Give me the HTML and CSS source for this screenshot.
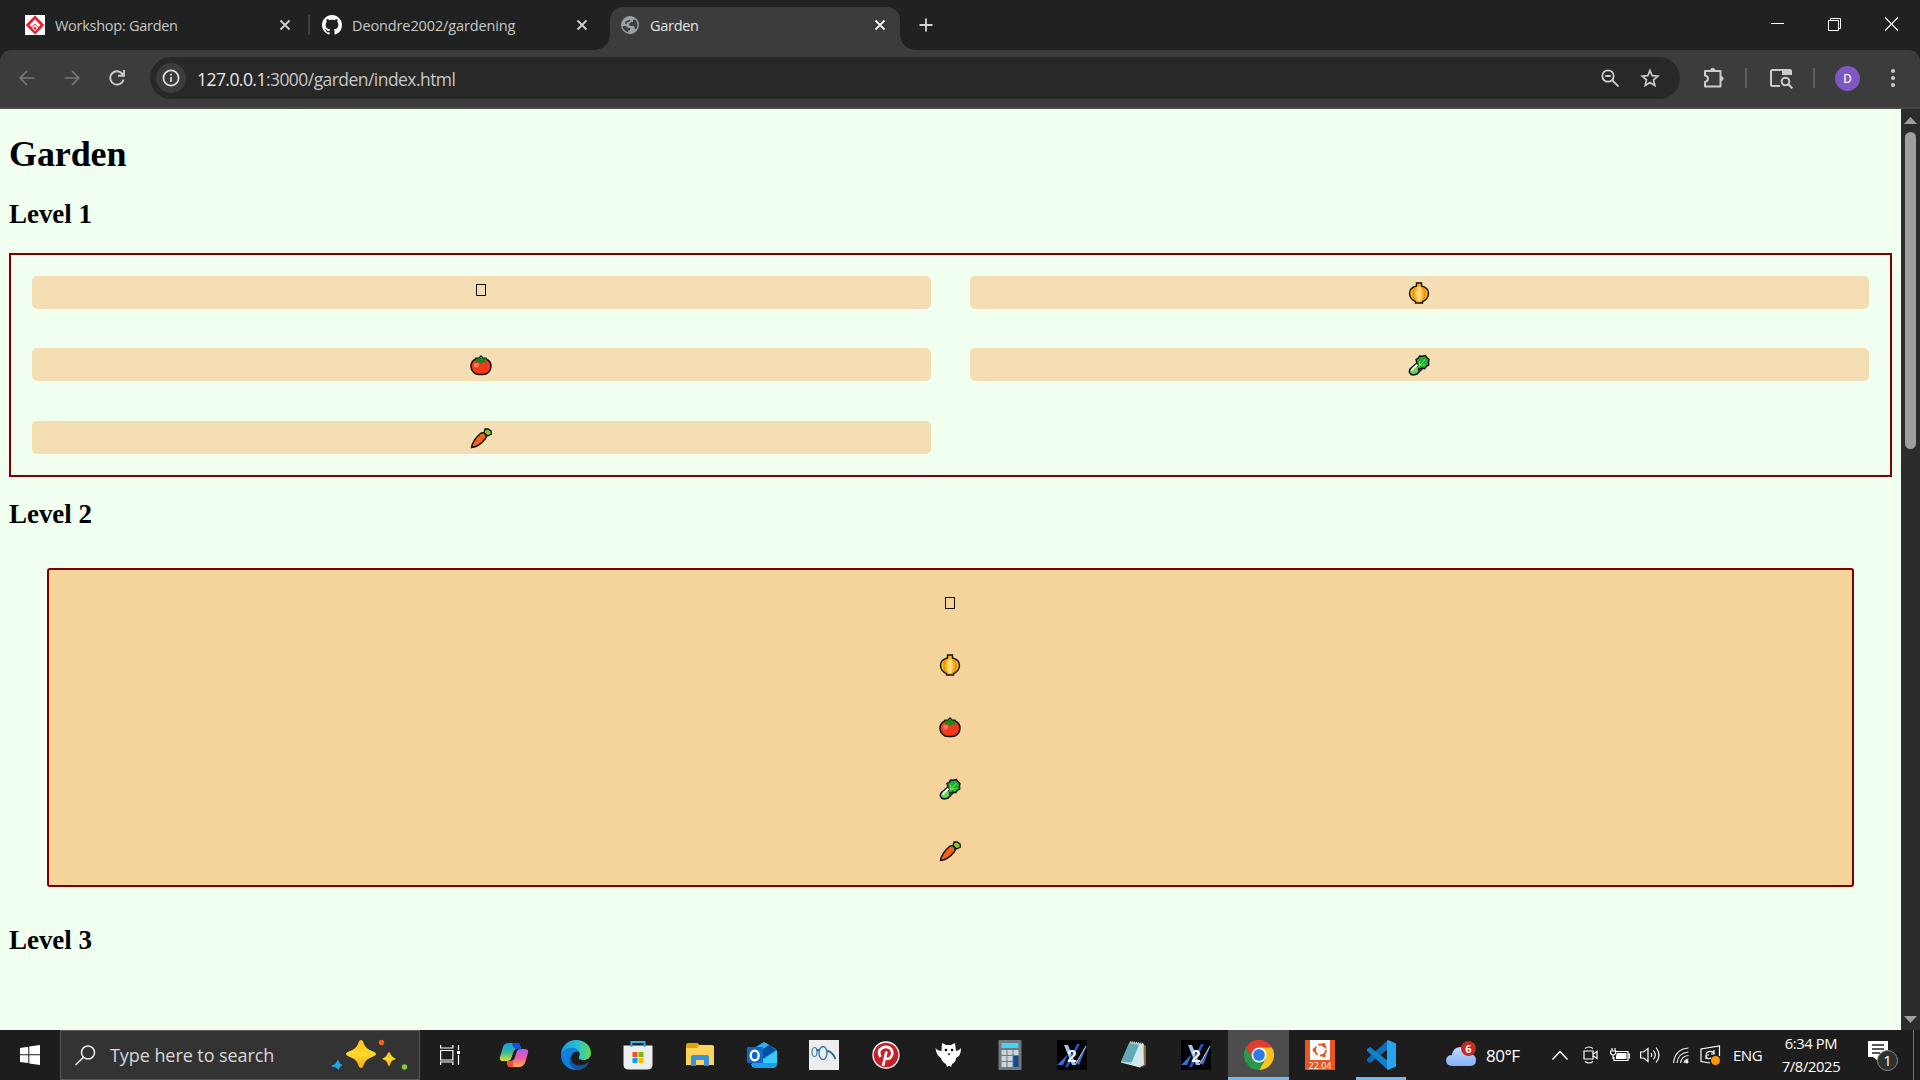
FILE: index.html
```html
<!DOCTYPE html>
<html lang="en">
<head>
<meta charset="utf-8">
<title>Garden</title>
<link rel="stylesheet" href="styles.css">
</head>
<body>
<svg class="defs" aria-hidden="true">
  <symbol id="tofu" viewBox="0 0 22 22"><path d="M6.5 2.5h9v11h-9z" fill="none" stroke="#111" shape-rendering="crispEdges"/></symbol>
  <symbol id="onion" viewBox="0 0 22 22">
    <path d="M8.500 1h5v3C18 5 20.500 8 20.500 11.500S18 18.500 14.500 19.500v1.500h-7v-1.500C4 18.500 1.500 15 1.500 11.500S4 5 8.500 4z" fill="#ffb31a" stroke="#111" stroke-width="1.400"/>
    <path d="M9.500 5h3c1.500 4 1.500 10 0 14h-3c-1.500-4-1.500-10 0-14z" fill="#ffd77a"/>
    <path d="M7 5.500c-2.500 4-2.500 9 0 13M15 5.500c2.500 4 2.500 9 0 13" fill="none" stroke="#d98a0a" stroke-width="1.200"/>
  </symbol>
  <symbol id="tomato" viewBox="0 0 22 22">
    <path d="M6 5h10c3 1 5 3.500 5 7.500 0 4.500-4 8-8 8H9c-4 0-8-3.500-8-8C1 8.500 3 6 6 5z" fill="#f23a1a" stroke="#111" stroke-width="1.500"/>
    <circle cx="6.500" cy="11" r="2.600" fill="#fa755e"/>
    <path d="M5 4.500l4-.5 2-2 2 2 4 .5" fill="none" stroke="#111" stroke-width="1.300"/>
    <path d="M11 2.800l1.800 1.700 4 .3-1.300 1.700 1 2.500-3-1L11 10 8.500 8l-3 1 1-2.500-1.300-1.700 4-.3z" fill="#118a1a"/>
  </symbol>
  <symbol id="greens" viewBox="0 0 22 22">
    <path d="M9.500 8.500L2.500 14.500c-2.500 3-.5 6.500 3 6.500l3.500-1 6-6" fill="#5fd45c" stroke="#111" stroke-width="1.500"/>
    <path d="M9 9L8 5.500l2.500-1.500 1-2 3 .3 3-.8 1.500 2.300 2 1.700-.5 3 .2 2.500-2.500 1.500-1.500 2.300-3-.8-3 2z" fill="#20b12c" stroke="#111" stroke-width="1.400"/>
    <path d="M7 17L17 5.500M11.500 11.500V7M12 11h5" stroke="#7be26e" fill="none"/>
    <path d="M3.500 17c1-3 4-4.500 6-6.500" stroke="#e8fbe8" stroke-width="2" fill="none"/>
  </symbol>
  <symbol id="carrot" viewBox="0 0 22 22">
    <path d="M14 6l1-4 3 0 3 2 .5 3-4 2z" fill="#8cc61a" stroke="#111" stroke-width="1.300"/>
    <path d="M1.500 20.500C2 16 6 10 10.500 6.500c4-2 7 1.500 5 5C12 16 7 20 1.500 20.500z" fill="#f9661a" stroke="#111" stroke-width="1.500"/>
    <path d="M9 9l1.500 1.500M6 13l1.500 1M12 11l1 1.500" stroke="#c84c0c"/>
  </symbol>
  <symbol id="x" viewBox="0 0 12 12"><path d="M1.500 1.500l9 9M10.500 1.500l-9 9" stroke="currentColor" stroke-width="1.800" fill="none"/></symbol>
  <symbol id="x2" viewBox="0 0 30 30">
    <path d="M0 0h30v30H0z" fill="#000"/>
    <path d="M7 5h4l8 20h-4z" fill="#9fc4ee"/><path d="M20 4h3L11 27H8z" fill="#2454c8"/>
    <path d="M0 25L11 14 6 25zM30 5L19 23l3 2z" fill="#3570d8"/><path d="M29 6L18 25" stroke="#b8cce8"/>
  </symbol>
</svg>

<header class="tabs">
  <div class="tab tab-first">
    <svg class="fav" viewBox="0 0 20 20"><path d="M0 0h20v20H0z" fill="#fff"/><path d="M10 .5l9.300 9.500-9.300 9.500L.7 10z" fill="#ec1c2c"/><path d="M10 4.300l5.500 5.700-2 2-3.500-3.500L6.500 12l-2-2z" fill="#fff"/><path d="M10 9.500l3.300 3.300-3.300 3.400-3.300-3.400z" fill="#fff"/><path d="M10 11.500l1.700 1.700L10 15l-1.700-1.800z" fill="#ec1c2c"/></svg>
    <span class="t-workshop">Workshop: Garden</span><svg class="close"><use href="#x"/></svg>
  </div>
  <div class="tab tab-second">
    <svg class="fav" viewBox="0 0 16 16"><path fill="#fff" d="M8 0C3.580 0 0 3.580 0 8c0 3.540 2.290 6.530 5.470 7.590.4.070.55-.17.55-.38 0-.19-.01-.82-.01-1.490-2.010.37-2.530-.49-2.690-.94-.09-.23-.48-.94-.82-1.130-.28-.15-.68-.52-.01-.53.63-.01 1.080.58 1.230.82.720 1.210 1.870.87 2.330.66.070-.52.280-.87.510-1.070-1.780-.2-3.640-.89-3.640-3.950 0-.87.310-1.590.82-2.150-.08-.2-.36-1.020.08-2.120 0 0 .67-.21 2.200.82.640-.18 1.320-.27 2-.27s1.360.09 2 .27c1.530-1.040 2.200-.82 2.200-.82.440 1.100.16 1.920.08 2.120.51.56.82 1.270.82 2.150 0 3.070-1.870 3.750-3.650 3.950.29.25.54.73.54 1.480 0 1.070-.01 1.930-.01 2.200 0 .21.150.46.550.38A8.010 8.010 0 0 0 16 8c0-4.420-3.580-8-8-8z"/></svg>
    <span class="t-github">Deondre2002/gardening</span><svg class="close"><use href="#x"/></svg>
  </div>
  <div class="tab tab-active">
    <svg class="fav globe" viewBox="0 0 18 18"><circle cx="9" cy="9" r="8.200" fill="#3c3c3c" stroke="#9aa0a6" stroke-width="1.500"/><path d="M9 .8A8.200 8.200 0 0 0 1 10h4l1 1.500 3 .5v2l-2 1 0 2c4 1 7 0 9-3l-2-1-1-3-4 0-1-2 2-2h2V4l3-1C13 1.500 11 .8 9 .8z" fill="#9aa0a6"/><path d="M5 8V6l4-1.500" stroke="#3c3c3c" stroke-width="1.500" fill="none"/></svg>
    <span class="t-garden">Garden</span><svg class="close"><use href="#x"/></svg>
  </div>
  <svg class="plus" viewBox="0 0 14 14"><path d="M7 .5v13M.5 7h13" stroke="#d5d5d5" stroke-width="1.800"/></svg>
  <div class="window-buttons">
    <svg width="13" height="14"><path d="M0 6.500h13" stroke="#fff"/></svg>
    <svg width="13" height="14"><path d="M.5 3.500h10v10H.5zM2.500 3V1.500h10v10H11" stroke="#fff" fill="none"/></svg>
    <svg width="13" height="14"><path d="M0 .5l13 13M13 .5l-13 13" stroke="#fff" stroke-width="1.200"/></svg>
  </div>
</header>

<nav class="toolbar">
  <div class="nav-icons">
    <svg width="16" height="16" viewBox="0 0 16 16" stroke="#777" stroke-width="1.700" fill="none"><path d="M15.500 8H1.500M8 1L1.200 8 8 15"/></svg>
    <svg width="16" height="16" viewBox="0 0 16 16" stroke="#777" stroke-width="1.700" fill="none"><path d="M.5 8h14M8 1l6.800 7L8 15"/></svg>
    <svg width="16" height="16" viewBox="0 0 16 16" stroke="#ccc" stroke-width="1.900" fill="none"><path d="M14.500 9.500A6.700 6.700 0 1 1 13 3.500L15 5.500M15 0v5.700H9"/></svg>
  </div>
  <div class="omnibox">
    <span class="info"><svg width="18" height="18"><circle cx="9" cy="9" r="7.600" fill="none" stroke="#dedede" stroke-width="1.700"/><path d="M9 8v5M9 4.800v1.800" stroke="#dedede" stroke-width="1.700"/></svg></span>
    <span class="url"><b>127.0.0.1</b>:3000/garden/index.html</span>
    <svg class="zoom-out" width="18" height="18" fill="none" stroke="#ccc" stroke-width="1.800"><circle cx="7" cy="7" r="5.700"/><path d="M11 11l6.500 6.500M4.200 7h5.600"/></svg>
    <svg class="star" width="20" height="20" viewBox="0 0 20 20" fill="none" stroke="#ccc" stroke-width="1.700"><path d="M10 2.500l2.200 5.200 5.600.5-4.300 3.700 1.300 5.500L10 14.500l-4.800 2.900 1.300-5.500-4.300-3.700 5.600-.5z"/></svg>
  </div>
  <svg class="puzzle" width="22" height="22" viewBox="0 0 22 22" fill="none" stroke="#ccc" stroke-width="2"><path d="M2 4h15.500v15.500H2v-4.500c4-1 4-5.500 0-6.500z" stroke-linejoin="round"/><path d="M7.500 3.500a2.200 2.200 0 0 1 4.400 0zM18 9.500a2 2 0 0 1 0 4.200z" fill="#ccc" stroke-width="1"/></svg>
  <i class="bar"></i>
  <svg class="side" width="23" height="20" viewBox="0 0 23 20" fill="none" stroke="#ccc" stroke-width="2"><path d="M10 17H2.500Q1 17 1 15.500V2.500Q1 1 2.500 1H20"/><path d="M12 0h8q2 0 2 2v4H12z" fill="#ccc" stroke="none"/><circle cx="15.500" cy="12.500" r="3.800"/><path d="M18.300 15.300l4 4"/></svg>
  <i class="bar"></i>
  <span class="avatar">D</span>
  <svg class="dots" width="4" height="20" fill="#ccc"><circle cx="2" cy="3" r="2"/><circle cx="2" cy="10" r="2"/><circle cx="2" cy="17" r="2"/></svg>
</nav>

<div class="viewport">
  <main class="page">
    <h1>Garden</h1>
    <h2>Level 1</h2>
    <section class="level-one">
      <div class="plot"><svg><use href="#tofu"/></svg></div>
      <div class="plot"><svg><use href="#onion"/></svg></div>
      <div class="plot"><svg><use href="#tomato"/></svg></div>
      <div class="plot"><svg><use href="#greens"/></svg></div>
      <div class="plot"><svg><use href="#carrot"/></svg></div>
    </section>
    <h2>Level 2</h2>
    <section class="level-two">
      <div class="missing"><svg><use href="#tofu"/></svg></div>
      <div><svg><use href="#onion"/></svg></div>
      <div><svg><use href="#tomato"/></svg></div>
      <div><svg><use href="#greens"/></svg></div>
      <div><svg><use href="#carrot"/></svg></div>
    </section>
    <h2>Level 3</h2>
  </main>
  <aside class="scrollbar">
    <svg width="13" height="7"><path d="M0 7L6.500 0 13 7z" fill="#9f9f9f"/></svg>
    <div class="thumb"></div>
    <svg class="down" width="13" height="7"><path d="M0 0l6.500 7L13 0z" fill="#9f9f9f"/></svg>
  </aside>
</div>

<footer class="taskbar">
  <div class="start"><svg width="20" height="20" fill="#fff"><path d="M0 3l8.300-1.200v7.500H0zM9.300 1.600L20 0v9.300H9.300zM0 10.300h8.300v7.800L0 17zM9.300 10.300H20V20l-10.700-1.600z"/></svg></div>
  <div class="search">
    <svg width="21" height="21" fill="none" stroke="#eee" stroke-width="1.500"><circle cx="13" cy="7.500" r="6.500"/><path d="M8.500 12.200L.5 20"/></svg>
    <span>Type here to search</span>
    <svg class="sparkles" width="78" height="32" viewBox="0 0 78 32">
      <defs><linearGradient id="gold" x1="0" y1="0" x2="0" y2="1"><stop offset="0" stop-color="#ffbd16"/><stop offset=".5" stop-color="#ffd92e"/><stop offset="1" stop-color="#ffa914"/></linearGradient></defs>
      <path d="M30 1q2 0 3 4 2 5 8 7 4 1.500 4 3t-4 3q-6 2-8 7-1 4-3 4t-3-4q-2-5-8-7-4-1.500-4-3t4-3q6-2 8-7 1-4 3-4z" fill="url(#gold)"/>
      <path d="M58 13q1 0 2 3 1 2 5 4-4 1-5 3-1 4-2 4t-2-4q-1-2-5-3 4-2 5-4 1-3 2-3z" fill="url(#gold)"/>
      <path d="M7 21.500l1.500 3.500 2.500 1-2.500 1.500-1 3-2.500-2.500-4-1 3.500-1.500z" fill="#16aaf2" stroke="#16aaf2" stroke-linejoin="round"/>
      <circle cx="50.500" cy="3.500" r="2.700" fill="#f2621e"/><circle cx="73.500" cy="28" r="2.700" fill="#86c937"/>
    </svg>
  </div>
  <div class="task-view"><svg width="20" height="20" fill="none" stroke="#fff" stroke-width="1.200"><path d="M.6 5.500h12.300v9.500H.6zM.6 0v3h12.300V0M.6 20v-3h12.300v3M18.500 0v5M18.500 10v10"/><path d="M17 6h3v3h-3z" fill="#fff" stroke="none"/></svg></div>

  <div class="app"><svg viewBox="0 0 30 30"><defs><linearGradient id="ca" x1="0" y1="0" x2="0" y2="1"><stop offset="0" stop-color="#159cf0"/><stop offset=".5" stop-color="#2ebc9a"/><stop offset="1" stop-color="#e6d92a"/></linearGradient><linearGradient id="cb" x1="0" y1="0" x2="0" y2="1"><stop offset="0" stop-color="#a961f0"/><stop offset=".5" stop-color="#ef5aa2"/><stop offset="1" stop-color="#ffae4e"/></linearGradient></defs><path d="M10 3h9q2 0 3 6h-4q-3 0-4 4l-2 6q-1 2-4 2H4q-4 0-3-4l3-10q1-4 6-4z" fill="url(#ca)"/><path d="M13 3h6q2 0 3 6h-5q-3-1-4-6z" fill="#1552cf"/><path d="M20 27h-9q-3 0-3-6h4q3 0 4-4l2-6q1-2 4-2h4q4 0 3 4l-3 10q-2 4-6 4z" fill="url(#cb)"/><path d="M8 21h4q2 0 2-2l0 8h-3q-3 0-3-6z" fill="#ef4b38"/></svg></div>
  <div class="app"><svg viewBox="0 0 30 30"><defs><linearGradient id="ea"><stop offset="0" stop-color="#159bdc"/><stop offset=".6" stop-color="#2dc4cf"/><stop offset="1" stop-color="#66dc45"/></linearGradient></defs><path d="M0 15C0 6 7 0 15 0c9 0 15 6 15 13 0 5-4 7-7 7-4 0-6-1-5-3 4-7-8-12-18-2z" fill="url(#ea)"/><path d="M0 16c0-8 16-12 18-4-5-1-8 2-8 6 0 7 7 10 11 11C10 33 0 25 0 16z" fill="#1180dc"/><path d="M12 13c-6 10 4 17 16 9-2 5-7 8-12 8-8-2-10-11-4-17z" fill="#1254a2"/></svg></div>
  <div class="app"><svg viewBox="0 0 30 30"><path d="M.5 5.500h29v19q0 5-5 5h-19q-5 0-5-5z" fill="#eee"/><path d="M8.500 7V2h13v5" fill="none" stroke="#2bb2ee" stroke-width="2"/><path d="M9.500 12h5v5h-5z" fill="#f25022"/><path d="M15.500 12h5v5h-5z" fill="#7fba00"/><path d="M9.500 18h5v5h-5z" fill="#00a4ef"/><path d="M15.500 18h5v5h-5z" fill="#ffb900"/></svg></div>
  <div class="app"><svg viewBox="0 0 30 30"><path d="M1 5q0-2 2-2h10l2 3v4H1z" fill="#e2a106"/><path d="M14 5h13q2 0 2 2v18H1V8h11z" fill="#ffd35c"/><path d="M6 26v-9q0-2 2-2h14q2 0 2 2v9h-5v-6h-8v6z" fill="#3a92dc"/></svg></div>
  <div class="app"><svg viewBox="0 0 30 30"><path d="M3 10L17 2l12 7v6L16 23 3 20z" fill="#1490df"/><path d="M12 11l10-6 7 5-14 9z" fill="#0a4aa5"/><path d="M9 8l8-6 5 3-11 7z" fill="#35aef0"/><path d="M30 10v13q0 5-5 5H9q-4 0-5-4l13-5z" fill="#38cdf5"/><path d="M5 23h25q0 5-5 5H9q-4 0-4-5z" fill="#1b9fe8"/><rect y="7" width="16" height="16" rx="1" fill="#0f68c8"/><ellipse cx="7.700" cy="15.500" rx="4" ry="4.800" fill="none" stroke="#fff" stroke-width="2.300"/></svg></div>
  <div class="app"><svg viewBox="0 0 30 30"><path d="M0 0h30v30H0z" fill="#ededed"/><ellipse cx="5.500" cy="12" rx="2.500" ry="4.500" fill="#e6f2fa" stroke="#427ba8" stroke-width="1.200"/><ellipse cx="14" cy="13" rx="4" ry="6.500" fill="#e6f2fa" stroke="#427ba8" stroke-width="1.400"/><path d="M8 11q1-2 2 0M18 11q5 0 8.500 8" stroke="#2f658f" stroke-width="1.800" fill="none"/></svg></div>
  <div class="app"><svg viewBox="0 0 30 30"><circle cx="15" cy="15" r="13" fill="#c81f2b" stroke="#fff" stroke-width="1.300"/><path d="M9.500 17Q6 11 11 8q5-2.500 9 1 3 5-1 9-4 2-5-1M15.500 11.500L12 26" fill="none" stroke="#fff" stroke-width="2.700"/></svg></div>
  <div class="app"><svg viewBox="0 0 30 30"><path d="M2.500 8q2 3 6 3L9 3l4 2h5l4-2 1 8q3 0 5-3 0 8-5 10 0 4-4 6l-1 3-2-1.500-2 1.500-1-3q-4-2-5-6-5-3-5.500-10z" fill="#fff"/><circle cx="13" cy="10" r="1.300"/><circle cx="19" cy="10" r="1.300"/><path d="M14.500 13.500h3l-1.500 2z"/></svg></div>
  <div class="app"><svg viewBox="0 0 30 30"><rect x="3.500" width="23" height="30" rx="1" fill="#71797f"/><path d="M6.500 3h17v5h-17z" fill="#45d3f5"/><path d="M6.500 10h5v5h-5zM12.500 10h5v5h-5zM18.500 10h5v5h-5zM6.500 16h5v5h-5zM12.500 16h5v5h-5zM6.500 22h5v5h-5zM12.500 22h5v5h-5z" fill="#cdd5dc"/><path d="M18.500 16h5v11h-5z" fill="#154a86"/></svg></div>
  <div class="app"><svg viewBox="0 0 30 30"><use href="#x2"/><text x="15" y="22" text-anchor="middle" class="x2-digit">2</text></svg></div>
  <div class="app"><svg viewBox="0 0 30 30"><path d="M24 4l3 2v19l-4 2z" fill="#8a6a38"/><path d="M11 2l14 2-1 20-3 3L2 22z" fill="#9dd0d4"/><path d="M10 3l10 2-4 17-14 0z" fill="#62a9b3"/><path d="M20 5l4-1 1 20-5 3-8-3z" fill="#cfe9e8"/><path d="M2 22l19 5 4-3" fill="none" stroke="#e7f1ee"/><path d="M11 2l14 2" stroke="#ddd" stroke-width="2" stroke-dasharray="1 1"/></svg></div>
  <div class="app"><svg viewBox="0 0 30 30"><use href="#x2"/><text x="15" y="22" text-anchor="middle" class="x2-digit">2</text></svg></div>
  <div class="app app-active"><svg viewBox="0 0 30 30"><path d="M2 7.500A15 15 0 0 1 28 7.500H15L8.500 18.800z" fill="#e33b2e"/><path d="M28 7.500A15 15 0 0 1 15 30L21.500 18.800 15 7.500z" fill="#fcc31e"/><path d="M2 7.500A15 15 0 0 0 15 30l6.500-11.200H8.500z" fill="#269a48"/><circle cx="15" cy="15" r="7.500" fill="#fff"/><circle cx="15" cy="15" r="5.900" fill="#2f7bea"/></svg></div>
  <div class="app"><svg viewBox="0 0 30 30"><path d="M0 0h30v30H0z" fill="#e95420"/><path d="M5 0h20v20H5z" fill="#fff"/><circle cx="15.500" cy="10" r="5.500" fill="none" stroke="#e95420" stroke-width="1.800" stroke-dasharray="9 2.500"/><g fill="#e95420"><circle cx="9.500" cy="10" r="1.900"/><circle cx="18.800" cy="5" r="1.900"/><circle cx="18.800" cy="15.500" r="1.900"/></g><text class="ubuntu-version" x="15" y="28.700" text-anchor="middle">22.04</text></svg></div>
  <div class="app app-open"><svg viewBox="0 0 30 30"><path d="M22 0v9L4 23l-3-2v-2z" fill="#0b6fb8"/><path d="M1 9l3-2 18 14v9L1 11z" fill="#1280cc"/><path d="M22 0l8 3.500v23L22 30l-1-1V1z" fill="#27a6ee"/></svg></div>

  <div class="tray">
    <svg class="weather" width="32" height="28" viewBox="0 0 32 28"><defs><linearGradient id="cl" x1="0" y1="0" x2="0" y2="1"><stop offset="0" stop-color="#c2daff"/><stop offset="1" stop-color="#85b0f5"/></linearGradient></defs><path d="M7 26q-7 0-7-6 1-5 6-5 1-8 9-8 7 0 8 7 7 0 7 6t-6 6z" fill="url(#cl)"/><circle cx="22.500" cy="8.500" r="7.500" fill="#c92a20"/><text x="22.500" y="12.500" class="badge-six" text-anchor="middle">6</text></svg>
    <span class="temp">80°F</span>
    <svg class="chev" width="16" height="10"><path d="M.5 9.500L8 1.500l7.500 8" stroke="#fff" stroke-width="1.400" fill="none"/></svg>
    <svg class="meet" width="15" height="18" fill="none" stroke="#fff" stroke-width="1.200"><path d="M1 5h9v8H1zM10.500 8l3.500-2.500v7L10.500 10M2 2.500q4-3 8 0M2 15.500q4 3 8 0"/></svg>
    <svg class="battery" width="20" height="14" fill="none" stroke="#fff" stroke-width="1.200"><path d="M6 3.500h12v9H4V9M18 6h1.500v4H18M2 0v3M5 0v3M.6 3h5v2.500q-2.500 3-5 0zM3 7v4"/><path d="M7 5h9.500v6H6V8z" fill="#fff" stroke="none"/></svg>
    <svg class="speaker" width="20" height="18" fill="none" stroke="#fff" stroke-width="1.200"><path d="M.6 6h3L8 2.500v13L3.600 12h-3zM11 7q1.500 2 0 4M13.500 4.500q3.500 4.500 0 9M16 1.500q6 7.500 0 15"/></svg>
    <svg class="wifi" width="16" height="17" fill="none" stroke="#eee" stroke-width="1.200"><path d="M.6 16Q2 2 15.500 1M4 16Q5 6 15.500 5M7.500 16Q8.500 9 15.500 8.500M11 16q.5-3.500 4.500-4"/><circle cx="13.800" cy="14.800" r="1.700" fill="#fff" stroke="none"/></svg>
    <svg class="sync" width="21" height="20" fill="none" stroke="#fff" stroke-width="1.200"><path d="M10 18L1 16.500V4l18.500-3v10M6 9q2-4 7-2l1 2M14 5v4h-3M6 14v-4h3M6 11q1 4 5 2"/><circle cx="15.500" cy="15.500" r="4.500" fill="#ff9500" stroke="none"/></svg>
    <span class="lang">ENG</span>
    <div class="clock"><span class="time">6:34 PM</span><span class="date">7/8/2025</span></div>
    <svg class="notify" width="31" height="32" viewBox="0 0 31 32"><path d="M0 1h20v16H10l0 4-5-4H0z" fill="#fff"/><path d="M4 5h12M4 9h12M4 13h8" stroke="#222" stroke-width="1.300"/><circle cx="19.500" cy="20.500" r="10" fill="#303030" stroke="#888"/><text x="19.500" y="26" text-anchor="middle" class="badge-one">1</text></svg>
    <i class="desktop-edge"></i>
  </div>
</footer>
</body>
</html>
```
FILE: styles.css
```css
* { box-sizing: border-box; }
body {
  margin: 0;
  width: 1920px;
  height: 1080px;
  overflow: hidden;
  display: flex;
  flex-direction: column;
  background: #202221;
  font-family: "Open Sans", "Noto Sans", sans-serif;
}
svg { display: block; flex: none; }
.defs { position: absolute; width: 0; height: 0; }

/* Tab strip */
.tabs { height: 50px; flex: none; display: flex; color: #c7c7c7; font-size: 14.500px; }
.tab { display: flex; align-items: center; height: 50px; white-space: nowrap; }
.tab .fav { width: 20px; height: 20px; margin-right: 10px; }
.tab .close { width: 12px; height: 12px; margin-left: auto; color: #d2d2d2; }
.tab-first { width: 266px; margin-left: 25px; }
.tab-second { margin-left: 17px; position: relative; width: 281px; padding: 0 1px 0 14px; }
.tab-second::before { content: ""; position: absolute; left: 0; top: 15px; width: 2px; height: 20px; background: #3c3e3d; }
.tab-active {
  position: relative;
  width: 290px;
  height: 43px;
  margin: 7px 0 0 21px;
  padding: 0 14px 7px 11px;
  border-radius: 13px 13px 0 0;
  background: #3c3c3c;
  color: #e3e3e3;
}
.tab-active::before, .tab-active::after {
  content: ""; position: absolute; bottom: 0; width: 15px; height: 15px;
}
.tab-active::before { left: -15px; background: radial-gradient(circle at 0 0, #202221 14.500px, #3c3c3c 15px); }
.tab-active::after { right: -15px; background: radial-gradient(circle at 100% 0, #202221 14.500px, #3c3c3c 15px); }
.tab .globe { width: 18px; height: 18px; margin-right: 11px; }
.tab-active .close { color: #eee; }
.t-workshop { letter-spacing: -.27px; }
.t-github { letter-spacing: -.12px; }
.t-garden { letter-spacing: -.3px; }
.plus { width: 14px; height: 14px; margin: 18px 0 0 19px; }
.window-buttons { display: flex; gap: 44px; margin: 17px 22px 0 auto; }

/* Toolbar */
.toolbar {
  height: 59px; flex: none; display: flex; align-items: center; padding: 0 0 1px;
  background: #3c3c3c; border-bottom: 2px solid #484848; border-radius: 11px 11px 0 0;
}
.nav-icons { display: flex; gap: 29px; margin-left: 19px; width: 131px; }
.omnibox {
  display: flex; align-items: center; width: 1530px; height: 42px; padding-left: 6px;
  border-radius: 21px; background: #282828; color: #c7c7c7;
}
.info { display: grid; place-items: center; width: 30px; height: 30px; border-radius: 50%; background: #3c3c3c; }
.url { margin-left: 11px; padding-top: 2px; font-size: 17.500px; letter-spacing: -.55px; }
.url b { font-weight: 400; color: #e8e8e8; }
.zoom-out { margin-left: auto; }
.star { margin: 0 20px 0 21px; }
.puzzle { margin-left: 23px; }
.bar { width: 2px; height: 20px; background: #5f5f5f; }
.puzzle + .bar { margin-left: 20px; }
.side { margin: 2px 20px 0 23px; }
.avatar {
  width: 25px; height: 25px; margin-left: 20px; border-radius: 50%; background: #7e57c2;
  color: #fff; font: 13px/25px Roboto, sans-serif; text-align: center;
}
.dots { margin-left: 31px; }

/* Web page */
.viewport { height: 921px; flex: none; display: flex; background: #f0fff0; }
.page { width: 1901px; padding: 25px 9px 0; font-family: "Liberation Serif", "Times New Roman", serif; color: #000; }
.page h1 { margin: 0; font-size: 36px; line-height: 41px; letter-spacing: -.1px; }
.page h2 { margin: 24px 0 0; font-size: 27px; line-height: 31px; letter-spacing: -.05px; }
.level-one {
  display: grid; grid-template-columns: 1fr 1fr; grid-template-rows: 33px 33px 33px; row-gap: 39.400px; column-gap: 39px;
  height: 224px; margin-top: 23px; padding: 21px; border: 2px solid maroon;
}
.plot { display: flex; justify-content: center; padding: 6px 1px 0 0; border-radius: 5px; background: #f5deb3; }
.plot svg, .level-two svg { width: 22px; height: 22px; }
.level-one + h2 { margin-top: 22px; }
.level-two {
  margin: 38px; height: 319px; padding-top: 1px; border: 2px solid maroon; border-radius: 3px; background: #f5d49b;
}
.level-two div { display: flex; justify-content: center; align-items: center; height: 62.200px; padding: 1px 1px 0 0; }
.level-two .missing { padding-top: 7px; }
.scrollbar { width: 19px; display: flex; flex-direction: column; align-items: center; padding-top: 8px; background: #2c2c2c; }
.thumb { width: 11px; height: 317px; margin-top: 8px; border-radius: 6px; background: #9f9f9f; }
.down { margin: auto 0 7px; }

/* Taskbar */
.taskbar { height: 50px; flex: none; display: flex; background: #1d1d1d; color: #fff; }
.start { width: 60px; display: grid; place-items: center; }
.search { width: 360px; display: flex; align-items: center; border: 1px solid #5a5a5a; background: #333; padding-left: 14px; }
.search span { margin-left: 14px; font-size: 18px; letter-spacing: -.07px; color: #d8d8d8; }
.sparkles { margin: -1px 10px 0 auto; }
.task-view { width: 63px; display: grid; align-items: center; padding-left: 20px; }
.app { width: 62px; flex: none; display: grid; place-items: center; position: relative; }
.app > svg { width: 30px; height: 30px; }
.app-active { width: 61px; margin-left: 1px; background: #4d4d4d; }
.app-active::after, .app-open::after { content: ""; position: absolute; inset: auto 0 0; height: 3px; background: #76b9ed; }
.app-open > svg { margin-right: 2px; }
.app-open::after { left: 5px; right: 7px; }
.x2-digit { font: bold 17px "Liberation Sans", sans-serif; fill: #fff; }
.ubuntu-version { font: 9px "Open Sans", sans-serif; fill: #fff; }
.tray { flex: 1; display: flex; align-items: center; white-space: nowrap; margin-left: 33px; }
.weather { margin-top: -3px; }
.badge-six { font: bold 11px "Open Sans", sans-serif; fill: #fff; }
.temp { width: 58px; margin-left: 8px; font-size: 17px; letter-spacing: -.500px; }
.chev { margin-left: 8px; }
.meet { margin-left: 15px; }
.battery { margin-left: 12px; }
.speaker { margin-left: 10px; }
.wifi { margin-left: 13px; }
.sync { margin-left: 11px; }
.lang { width: 36px; margin-left: 12px; font-size: 15px; letter-spacing: -.5px; }
.clock { display: flex; flex-direction: column; width: 86px; align-items: center; margin-left: -1px; font-size: 14.800px; line-height: 23px; letter-spacing: -.4px; }
.notify { margin: 2px 0 0 14px; }
.badge-one { font: 15px "Open Sans", sans-serif; fill: #fff; }
.desktop-edge { margin-left: 14px; width: 1px; height: 50px; background: #777; }
```
